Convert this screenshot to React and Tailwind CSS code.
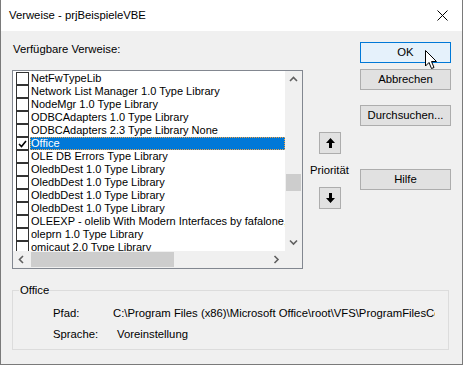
import React from 'react';

const items = [
    { name: 'NetFwTypeLib' },
    { name: 'Network List Manager 1.0 Type Library' },
    { name: 'NodeMgr 1.0 Type Library' },
    { name: 'ODBCAdapters 1.0 Type Library' },
    { name: 'ODBCAdapters 2.3 Type Library None' },
    { name: 'Office', checked: true, selected: true },
    { name: 'OLE DB Errors Type Library' },
    { name: 'OledbDest 1.0 Type Library' },
    { name: 'OledbDest 1.0 Type Library' },
    { name: 'OledbDest 1.0 Type Library' },
    { name: 'OledbDest 1.0 Type Library' },
    { name: 'OLEEXP - olelib With Modern Interfaces by fafalone, ', tail: true },
    { name: 'oleprn 1.0 Type Library' },
    { name: 'omicaut 2.0 Type Library' },
];

const Chevron = ({ dir }) => {
    const paths = {
        up: 'M1 5 L4.5 1.5 L8 5',
        down: 'M1 1.5 L4.5 5 L8 1.5',
        left: 'M5 1 L1.5 4.5 L5 8',
        right: 'M1.5 1 L5 4.5 L1.5 8',
    };
    const vertical = dir === 'up' || dir === 'down';
    return (
        <svg width={vertical ? 9 : 7} height={vertical ? 7 : 9} viewBox={vertical ? '0 0 9 7' : '0 0 7 9'}>
            <path d={paths[dir]} fill="none" stroke="#606060" strokeWidth="1.6" />
        </svg>
    );
};

const Button = ({ children, primary, className = '' }) => (
    <div
        className={`w-[91px] h-[21px] flex items-center justify-center text-[11.3px] text-black border ${
            primary ? 'border-[#0078d7] bg-[#e5f1fb]' : 'border-[#adadad] bg-[#e1e1e1]'
        } ${className}`}
    >
        {children}
    </div>
);

const ArrowButton = ({ down }) => (
    <div className="w-[22px] h-[22px] ml-[16px] flex items-center justify-center border border-[#adadad] bg-[#e1e1e1]">
        <svg width="9" height="10" viewBox="0 0 9 10">
            {down ? (
                <path d="M3 0 H6 V5 H9 L4.5 10 L0 5 H3 Z" fill="#000" />
            ) : (
                <path d="M3 10 H6 V5 H9 L4.5 0 L0 5 H3 Z" fill="#000" />
            )}
        </svg>
    </div>
);

function App() {
    return (
        <div
            className="relative w-[463px] h-[365px] bg-[#f0f0f0] border-x border-b border-[#7a7a7a] overflow-hidden text-black"
            style={{ fontFamily: '"Liberation Sans", Arial, sans-serif' }}
        >
            {/* title bar */}
            <div className="h-[31px] bg-white flex items-center justify-between pl-[8px] pr-[14px]">
                <span className="text-[11.3px]">Verweise - prjBeispieleVBE</span>
                <svg width="11" height="11" viewBox="0 0 11 11">
                    <path d="M0.5 0.5 L10.5 10.5 M10.5 0.5 L0.5 10.5" stroke="#000" strokeWidth="1" />
                </svg>
            </div>

            <div className="flex pl-[11px]">
                {/* list column */}
                <div className="w-[291px]">
                    <div className="pt-[11px] h-[25px] text-[11.3px] leading-[14px] pl-[1px]">Verfügbare Verweise:</div>
                    <div className="mt-[14px] h-[199px] border border-[#828790] bg-white grid grid-cols-[1fr_17px] grid-rows-[1fr_17px]">
                        <div className="overflow-hidden pt-[1px]">
                            {items.map((it, i) => (
                                <div key={i} className="h-[13px] flex items-center whitespace-nowrap">
                                    <div className="ml-[3px] w-[13px] h-[13px] border border-[#333333] bg-white flex items-center justify-center shrink-0">
                                        {it.checked && (
                                            <svg width="9" height="8" viewBox="0 0 9 8">
                                                <path d="M1 4 L3.5 6.5 L8 1" fill="none" stroke="#000" strokeWidth="1.6" />
                                            </svg>
                                        )}
                                    </div>
                                    <div
                                        className={`h-[13px] flex items-center text-[11px] leading-[13px] ${
                                            it.selected
                                                ? 'ml-[1px] pl-[1px] flex-1 bg-[#0078d7] text-white outline-1 outline-dotted outline-[#f2a344] -outline-offset-1'
                                                : 'ml-[1px] pl-[1px] text-black'
                                        }`}
                                    >
                                        {it.name}
                                        {it.tail && <span className="text-[#e8b830]">'</span>}
                                    </div>
                                </div>
                            ))}
                        </div>
                        {/* vertical scrollbar */}
                        <div className="bg-[#f0f0f0] flex flex-col items-center">
                            <div className="h-[17px] flex items-center justify-center">
                                <Chevron dir="up" />
                            </div>
                            <div className="flex-1 w-full px-[1px]">
                                <div className="mt-[86px] h-[17px] bg-[#cdcdcd]" />
                            </div>
                            <div className="h-[17px] flex items-center justify-center">
                                <Chevron dir="down" />
                            </div>
                        </div>
                        {/* horizontal scrollbar */}
                        <div className="bg-[#f0f0f0] flex items-center">
                            <div className="w-[17px] h-full flex items-center justify-center">
                                <Chevron dir="left" />
                            </div>
                            <div className="flex-1 h-full py-[1px]">
                                <div className="w-[143px] h-full bg-[#cdcdcd] ml-[1px]" />
                            </div>
                            <div className="w-[17px] h-full flex items-center justify-center">
                                <Chevron dir="right" />
                            </div>
                        </div>
                        <div className="bg-[#f0f0f0]" />
                    </div>
                </div>

                {/* priority column */}
                <div className="w-[57px] pt-[101px] flex flex-col">
                    <ArrowButton />
                    <div className="h-[33px] flex items-center pl-[7px] text-[11.3px]">Priorität</div>
                    <ArrowButton down />
                </div>

                {/* button column */}
                <div className="pt-[11px] flex flex-col">
                    <Button primary>OK</Button>
                    <Button className="mt-[6px]">Abbrechen</Button>
                    <Button className="mt-[15px]">Durchsuchen...</Button>
                    <Button className="mt-[43px]">Hilfe</Button>
                </div>
            </div>

            {/* group box */}
            <fieldset className="mx-[11px] mt-[14px] w-[437px] h-[67px] border border-[#dcdcdc] pl-[6px]">
                <legend className="px-[1px] text-[11.3px] leading-[14px]">Office</legend>
                <div className="grid grid-cols-[60px_1fr] gap-y-[7px] pl-[34px] pt-[9px] text-[11.3px] leading-[14px] w-[416px] overflow-hidden whitespace-nowrap">
                    <span>Pfad:</span>
                    <span className="overflow-hidden">C:\Program Files (x86)\Microsoft Office\root\VFS\ProgramFilesCommon</span>
                    <span>Sprache:</span>
                    <span className="pl-[4px]">Voreinstellung</span>
                </div>
            </fieldset>

            {/* mouse cursor */}
            <svg className="absolute left-[424px] top-[50px]" width="13" height="20" viewBox="0 0 13 20">
                <path
                    d="M0.5 0.5 L0.5 16 L4 12.5 L6.5 18.5 L9 17.5 L6.5 11.5 L11.5 11.5 Z"
                    fill="#fff"
                    stroke="#000"
                    strokeWidth="1"
                    strokeLinejoin="round"
                />
            </svg>
        </div>
    );
}

export default App;
